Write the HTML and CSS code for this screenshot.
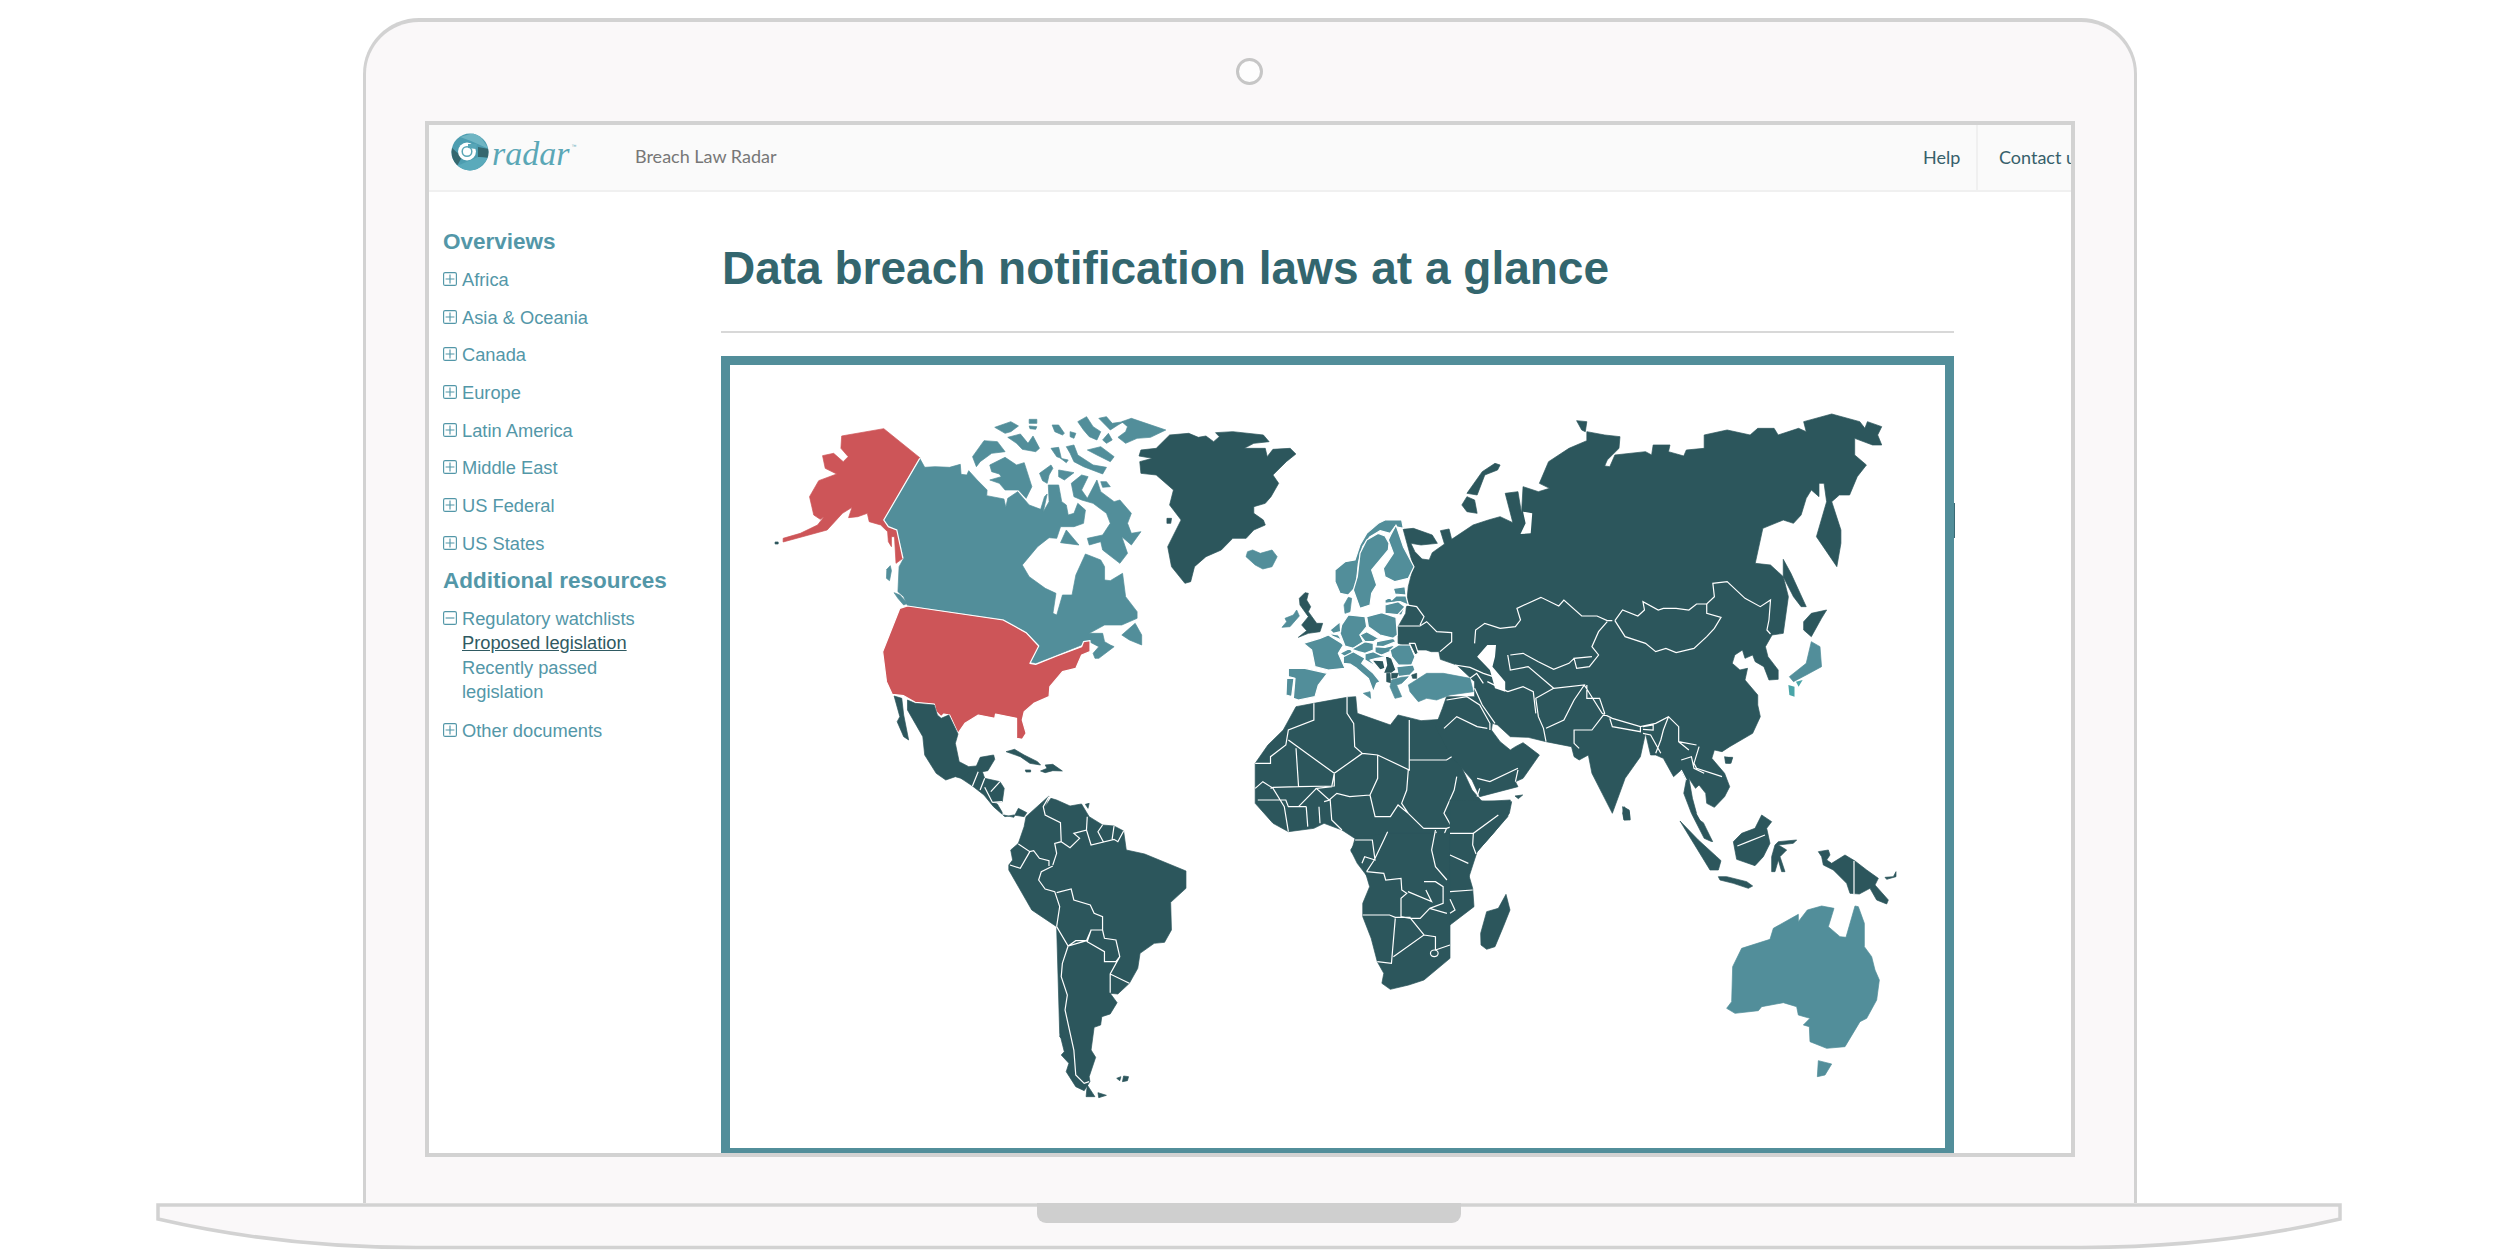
FILE: index.html
```html
<!DOCTYPE html>
<html lang="en">
<head>
<meta charset="utf-8">
<title>Breach Law Radar</title>
<link rel="stylesheet" href="styles.css">
</head>
<body>
<div class="laptop">
  <div class="lid">
    <div class="camera"></div>
    <div class="screen">
      <header class="topbar">
        <div class="logo">
          <svg class="logo-mark" viewBox="0 0 38 38" aria-hidden="true">
            <defs><clipPath id="lc"><circle cx="19" cy="19" r="18.5"/></clipPath></defs>
            <g clip-path="url(#lc)">
              <rect width="38" height="38" fill="#4d9db0"/>
              <polygon points="9,4 26,-1 38,16 20,8" fill="#6fb5c3"/>
              <polygon points="0,14 11,24 6,33 0,26" fill="#35686f"/>
              <polygon points="27,14 38,16 38,25 27,24" fill="#35686f"/>
              <polygon points="6,33 27,24 38,25 24,39 8,39" fill="#5aaabb"/>
            </g>
            <circle cx="16" cy="18.5" r="9" fill="#fff"/>
            <circle cx="16" cy="18.5" r="4.8" fill="none" stroke="#5ba7b6" stroke-width="1.5"/>
            <polygon points="17,11 26,11 25,16 17,15" fill="#57a6b7"/>
          </svg>
          <span class="logo-word">radar</span><span class="logo-tm">™</span>
        </div>
        <div class="product">Breach Law Radar</div>
        <nav class="topnav">
          <a class="topnav-link topnav-help">Help</a>
          <a class="topnav-link topnav-contact">Contact us</a>
        </nav>
      </header>
      <div class="page">
        <aside class="sidebar">
          <h3 class="side-head">Overviews</h3>
          <ul class="tree">
            <li class="tree-row"><svg class="box" viewBox="0 0 14 14"><rect x=".6" y=".6" width="12.8" height="12.8" rx="1.5"/><path d="M2.6 7H11.4M7 2.6V11.4"/></svg>Africa</li>
            <li class="tree-row"><svg class="box" viewBox="0 0 14 14"><rect x=".6" y=".6" width="12.8" height="12.8" rx="1.5"/><path d="M2.6 7H11.4M7 2.6V11.4"/></svg>Asia &amp; Oceania</li>
            <li class="tree-row"><svg class="box" viewBox="0 0 14 14"><rect x=".6" y=".6" width="12.8" height="12.8" rx="1.5"/><path d="M2.6 7H11.4M7 2.6V11.4"/></svg>Canada</li>
            <li class="tree-row"><svg class="box" viewBox="0 0 14 14"><rect x=".6" y=".6" width="12.8" height="12.8" rx="1.5"/><path d="M2.6 7H11.4M7 2.6V11.4"/></svg>Europe</li>
            <li class="tree-row"><svg class="box" viewBox="0 0 14 14"><rect x=".6" y=".6" width="12.8" height="12.8" rx="1.5"/><path d="M2.6 7H11.4M7 2.6V11.4"/></svg>Latin America</li>
            <li class="tree-row"><svg class="box" viewBox="0 0 14 14"><rect x=".6" y=".6" width="12.8" height="12.8" rx="1.5"/><path d="M2.6 7H11.4M7 2.6V11.4"/></svg>Middle East</li>
            <li class="tree-row"><svg class="box" viewBox="0 0 14 14"><rect x=".6" y=".6" width="12.8" height="12.8" rx="1.5"/><path d="M2.6 7H11.4M7 2.6V11.4"/></svg>US Federal</li>
            <li class="tree-row"><svg class="box" viewBox="0 0 14 14"><rect x=".6" y=".6" width="12.8" height="12.8" rx="1.5"/><path d="M2.6 7H11.4M7 2.6V11.4"/></svg>US States</li>
          </ul>
          <h3 class="side-head">Additional resources</h3>
          <ul class="tree">
            <li class="tree-group">
              <div class="tree-line"><svg class="box" viewBox="0 0 14 14"><rect x=".6" y=".6" width="12.8" height="12.8" rx="1.5"/><path d="M2.6 7H11.4"/></svg>Regulatory watchlists</div>
              <div class="sub"><a class="sub-current">Proposed legislation</a></div>
              <div class="sub">Recently passed<br>legislation</div>
            </li>
            <li class="tree-row"><svg class="box" viewBox="0 0 14 14"><rect x=".6" y=".6" width="12.8" height="12.8" rx="1.5"/><path d="M2.6 7H11.4M7 2.6V11.4"/></svg>Other documents</li>
          </ul>
        </aside>
        <main class="main">
          <h1 class="title">Data breach notification laws at a glance</h1>
          <hr class="rule">
          <figure class="map-frame">
            <svg class="map" viewBox="730 365 1215 783" role="img" aria-label="World map">
              <!-- North America -->
              <g transform="translate(720 350) scale(.38265 .33333)">
                <path class="red" d="M318,258 428,236 522,323 428,510 440,530 462,540 478,625 460,640 456,560 448,560 448,590 440,575 438,545 420,525 390,515 385,490 360,500 336,503 345,472 320,490 300,515 280,540 165,576 165,565 210,550 255,525 272,500 262,508 245,495 234,440 258,392 305,372 275,355 268,317 297,310 322,335 335,320 316,295Z"/>
                <path class="dark" d="M144,576 152,576 152,582 144,582Z"/>
                <path class="teal" d="M522,325 535,352 562,350 600,352 628,343 630,373 645,375 650,362 672,390 698,420 697,437 742,447 747,472 752,445 778,425 808,465 838,478 848,440 855,432 845,485 860,455 858,405 885,405 893,455 905,465 910,495 925,490 935,460 955,480 950,520 925,530 890,530 880,565 860,563 830,590 790,645 808,680 850,715 878,730 870,790 880,795 895,735 920,735 930,675 955,612 995,630 1005,650 1005,690 1020,692 1052,670 1060,740 1090,785 1090,805 1050,825 1005,825 965,850 1000,850 1005,875 1020,885 1030,890 990,925 980,925 975,910 990,890 965,875 945,885 880,915 825,940 810,935 833,885 800,845 740,808 490,767 480,740 465,725 468,650 480,625 462,540 440,530 428,510Z"/>
                <path class="teal" d="M945,375 962,380 945,420 960,445 985,390 995,425 1030,455 1045,450 1075,490 1065,520 1075,550 1100,545 1075,585 1050,560 1065,610 1045,640 1000,600 995,575 965,585 960,565 1000,555 1020,520 1010,490 975,460 945,450 925,440 918,400Z"/>
                <path class="teal" d="M890,578 905,540 938,585Z"/>
                <path class="teal" d="M660,320 690,272 725,275 745,305 710,310 680,335 670,350Z"/>
                <path class="teal" d="M705,345 745,322 775,345 795,338 815,410 800,445 780,420 745,420 730,400 705,390 735,380 730,372 710,365Z"/>
                <path class="teal" d="M835,370 865,345 870,355 860,375 855,400 843,392Z"/>
                <path class="teal" d="M885,360 925,368 900,390 885,380Z"/>
                <path class="teal" d="M718,232 760,215 780,228 760,245 745,250Z"/>
                <path class="teal" d="M752,262 785,252 805,280 818,258 835,295 825,305 790,298 775,280Z"/>
                <path class="teal" d="M808,208 828,208 828,220 808,220Z"/>
                <path class="teal" d="M808,228 828,230 825,238 810,236Z"/>
                <path class="teal" d="M868,225 885,225 900,250 895,255 875,245Z"/>
                <path class="teal" d="M915,245 930,250 925,265 915,260Z"/>
                <path class="teal" d="M935,215 958,200 975,230 995,245 985,270 965,260 950,240Z"/>
                <path class="teal" d="M990,205 1010,200 1025,220 1055,215 1040,225 1020,240Z"/>
                <path class="teal" d="M1075,205 1165,240 1125,262 1090,265 1060,280 1040,262 1060,245 1065,230 1050,215Z"/>
                <path class="teal" d="M865,295 885,292 892,325 880,320Z"/>
                <path class="teal" d="M905,290 925,285 935,315 975,345 1010,352 1000,372 950,350 925,335 915,310Z"/>
                <path class="teal" d="M960,300 995,290 1030,320 1020,335 985,315Z"/>
                <path class="teal" d="M1015,250 1000,270 1010,280 1025,270Z"/>
                <path class="teal" d="M890,325 910,330 905,338Z"/>
                <path class="teal" d="M995,395 1010,395 1020,410 1000,412Z"/>
                <path class="teal" d="M1050,855 1085,820 1102,855 1102,885 1070,870Z"/>
                <path class="teal" d="M436,658 445,647 448,662 443,692 435,685Z"/>
                <path class="teal" d="M455,728 470,735 490,760 480,765 465,745Z"/>
                <path class="red stroked" d="M470,775 490,768 740,810 800,848 833,888 810,940 825,943 880,918 945,890 950,875 967,872 967,905 945,915 930,955 895,965 862,1010 860,1040 820,1060 795,1085 790,1110 800,1150 790,1168 775,1165 775,1105 720,1092 718,1105 675,1095 640,1120 622,1150 600,1095 585,1092 578,1100 565,1085 560,1062 510,1057 480,1037 450,1033 435,995 425,905Z"/>
                <path class="line" d="M522,325 428,510 440,530 462,540 478,625"/>
                <path class="dark" d="M490,1050 510,1060 560,1065 568,1095 578,1105 598,1095 622,1152 615,1180 625,1235 650,1250 670,1248 680,1222 715,1215 718,1228 700,1262 665,1270 660,1295 645,1290 615,1280 590,1290 565,1270 535,1215 530,1160 490,1080Z"/>
                <path class="dark" d="M455,1038 475,1045 480,1095 493,1170 480,1160 463,1115 470,1100Z"/>
                <path class="dark" d="M1100,300 1140,295 1175,255 1225,250 1250,262 1270,258 1290,275 1305,260 1295,248 1340,245 1420,255 1435,275 1395,280 1370,295 1425,295 1430,320 1445,298 1490,295 1505,312 1480,335 1445,375 1460,400 1440,440 1425,460 1395,470 1395,490 1420,510 1425,525 1395,540 1375,565 1340,565 1310,600 1270,620 1240,650 1230,695 1215,700 1180,650 1170,590 1205,510 1175,465 1185,420 1140,375 1100,370 1097,335 1130,325 1095,318Z"/>
                <path class="white" d="M1165,515 1178,500 1180,520 1170,525Z"/>
                <path class="dark" d="M1168,505 1180,505 1178,520 1168,520Z"/>
                <path class="white" d="M1410,480 1430,478 1425,492 1410,490Z"/>
              </g>
              <!-- South America -->
              <g transform="translate(850 700) scale(.38265 .33333)">
                <path class="dark" d="M290,235 322,210 345,212 352,235 392,245 403,265 398,305 372,307 385,312 402,345 428,352 440,325 462,338 455,350 428,345 405,350 375,320 350,285 320,258Z"/>
                <path class="line" d="M320,258 335,215M340,270 352,235M352,262 372,307M372,307 398,305M368,275 392,245M402,318 400,345"/>
                <path class="dark" d="M408,155 430,148 455,165 490,185 498,195 470,190 445,170 420,160Z"/>
                <path class="dark" d="M510,195 530,193 555,213 530,212 510,218 498,213 515,205Z"/>
                <path class="dark" d="M458,210 472,210 472,216 460,216Z"/>
                <path class="dark" d="M615,313 625,310 622,325Z"/>
                <path class="dark" d="M460,350 520,288 510,320 525,295 540,300 575,318 605,312 625,350 660,375 690,378 715,393 722,450 770,462 878,513 878,565 838,607 840,690 822,727 795,730 758,760 752,805 730,850 700,882 680,880 698,908 680,942 658,950 655,975 638,982 630,1050 642,1072 625,1130 627,1145 612,1172 590,1160 565,1115 572,1090 552,1065 560,1055 548,1000 540,680 475,630 415,510 415,495 425,480 420,450 440,430 455,380Z"/>
                <path class="dark" d="M620,1155 640,1190 617,1190Z"/>
                <path class="dark" d="M648,1178 670,1186 650,1193Z"/>
                <path class="dark" d="M697,1135 708,1130 705,1142Z"/>
                <path class="dark" d="M715,1128 728,1130 725,1142 712,1145Z"/>
                <path class="dark" d="M550,998 555,1000 555,1018 548,1010Z"/>
                <path class="line" d="M520,290 505,320 510,345 550,368 552,425 535,430 540,460 530,495M440,432 470,455 480,452 495,475 520,482 520,498M470,455 445,505 418,495M552,425 575,443 600,415 585,400 618,390 620,350M618,390 630,435 690,418 700,425 715,393M660,375 648,395 662,425M690,378 685,418M530,498 500,515 493,540 510,567 535,575 548,620 540,680M540,578 578,567 585,600 628,615 638,640 660,650 660,690 630,690 618,722 570,738 540,680M630,690 620,725 665,755 665,785 695,785 705,770 695,720 665,715 660,690M570,738 555,790 552,830 568,885 562,930 585,1050 590,1125 612,1150 625,1145M705,770 680,822 680,878M680,822 730,850M570,738 590,722 618,722"/>
              </g>
              <!-- Asia and north Africa -->
              <g transform="translate(1120 380) scale(.51020 .33333)">
                <path class="dark" d="M345,980 380,970 445,952 462,950 465,1000 530,1035 545,1005 590,1022 630,1018 640,1040 660,1130 690,1230 710,1265 765,1260 760,1310 700,1415 682,1500 490,1500 465,1450 452,1410 465,1380 435,1350 400,1330 380,1345 330,1355 300,1330 265,1270 265,1150 290,1095 320,1050Z"/>
                <path class="dark" d="M555,448 575,445 612,465 622,490 590,495 570,490 578,515 592,537 606,540 612,518 636,492 628,452 645,447 650,478 692,435 722,420 745,410 770,428 755,340 780,335 787,400 790,320 820,335 842,325 822,310 840,245 880,205 915,182 915,155 950,165 980,170 978,205 955,240 950,258 960,260 970,225 1030,215 1042,225 1045,195 1078,195 1075,215 1105,228 1110,210 1145,205 1145,165 1190,150 1235,165 1250,145 1282,145 1290,165 1330,145 1345,155 1340,125 1395,102 1450,125 1460,145 1465,125 1493,140 1485,165 1493,195 1475,195 1440,175 1440,225 1463,255 1445,290 1430,345 1410,345 1395,365 1413,450 1413,490 1405,560 1365,470 1385,365 1380,310 1370,310 1370,350 1355,330 1345,355 1335,405 1320,430 1300,420 1260,445 1245,550 1275,555 1300,590 1310,650 1300,760 1278,765 1265,800 1270,830 1290,870 1290,898 1272,900 1262,860 1245,845 1240,825 1225,835 1220,810 1205,825 1200,850 1215,870 1230,865 1225,900 1250,945 1250,975 1255,1010 1240,1060 1195,1100 1180,1115 1165,1110 1160,1135 1185,1180 1195,1220 1185,1250 1165,1282 1150,1270 1148,1240 1135,1215 1128,1225 1115,1195 1122,1255 1130,1300 1160,1385 1145,1375 1120,1300 1105,1240 1110,1200 1100,1170 1085,1190 1065,1135 1050,1125 1040,1125 1030,1060 1020,1130 990,1195 965,1300 945,1240 925,1180 918,1125 900,1140 890,1130 885,1100 835,1085 800,1072 765,1070 740,1035 730,1030 728,1050 745,1085 765,1110 775,1100 790,1088 822,1125 790,1195 775,1205 780,1220 705,1250 690,1200 650,1130 618,1040 632,985 640,950 695,950 695,905 660,855 628,838 625,815 610,815 600,810 575,810 545,790 545,740 560,700 565,620 575,560Z"/>
                <path class="white" d="M790,395 808,400 805,460 785,462 795,430Z"/>
                <path class="white" d="M700,830 720,795 737,795 735,830 730,860 755,905 755,935 735,925 725,870Z"/>
                <path class="white" d="M1130,1300 1145,1310 1155,1365 1145,1340Z"/>
                <path class="dark" d="M680,340 710,275 735,250 745,255 740,270 715,285 700,345Z"/>
                <path class="dark" d="M670,375 680,350 695,360 700,400 680,395Z"/>
                <path class="dark" d="M895,122 915,125 912,155 905,150Z"/>
                <path class="dark" d="M1300,538 1315,580 1345,680 1335,680 1320,650 1300,590Z"/>
                <path class="dark" d="M1340,725 1355,700 1385,690 1375,715 1355,770 1340,750Z"/>
                <path class="dark" d="M1185,1130 1200,1135 1195,1150 1187,1150Z"/>
                <path class="dark" d="M985,1280 998,1290 1000,1320 988,1320Z"/>
                <path class="teal" d="M1355,785 1372,800 1375,860 1345,885 1320,905 1312,890 1345,850Z"/>
                <path class="bright" d="M1310,915 1322,920 1322,950 1312,945Z"/>
                <path class="bright" d="M1325,905 1338,900 1330,920Z"/>
                <path class="teal" d="M250,515 260,510 275,520 298,510 308,530 298,560 280,567 265,555 247,530Z"/>
                <path class="line" d="M695,790 697,750 715,730 745,745 775,740 785,720 778,685 825,652 860,678 870,660 905,708 935,708 955,722 965,722"/>
                <path class="line" d="M970,722 985,690 1015,708 1028,690 1025,665 1055,690 1065,685 1090,685 1115,690 1130,672 1150,672 1165,650 1162,610 1190,605 1225,655 1255,680 1275,660 1272,720 1268,750 1275,762"/>
                <path class="line" d="M970,722 990,770 1030,790 1050,815 1070,805 1090,818 1125,805 1150,770 1165,745 1178,712 1150,700 1150,672"/>
                <path class="line" d="M955,725 938,755 925,800 938,825 920,860 895,865 890,835 925,830M765,825 790,820 820,845 850,868 880,850 890,835M760,825 765,870 800,860 850,925M850,925 815,955 820,1010 830,1045 835,1085M850,925 910,915 890,960 870,1020 835,1045M915,915 915,955 940,955 950,1000 925,1050 890,1050 890,1090 900,1105M910,915 945,1000 965,1015 1020,1040 1050,1030 1075,1010 1095,1040 1095,1085 1130,1095M960,1015 965,1040 1020,1055 1020,1040M1025,1040 1045,1035 1045,1050 1025,1048M1025,1060 1040,1065 1060,1120M1060,1080 1050,1120M1075,1010 1065,1050 1060,1080M1095,1085 1115,1110M1135,1100 1125,1150 1130,1165 1180,1190M1100,1140 1120,1130 1125,1165 1145,1180M1100,1170 1110,1200M695,925 710,975 735,1030M760,935 790,920 810,935 815,1000M640,960 680,950 705,975 725,1030 725,1050M635,1045 660,1010 700,1040 720,1045M700,1195 725,1205 780,1165M780,1170 775,1205M700,1250 705,1225M760,935 720,905"/>
                <path class="line" d="M265,1150 295,1150 295,1130 325,1095 330,1050 380,1020 380,970M330,1080 420,1180 475,1120 460,1100 458,1030 445,1000 445,950M475,1120 505,1125 567,1170 567,1020M567,1140 640,1140 650,1130M345,1105 350,1220 300,1222 295,1225M350,1220 420,1218 420,1180M420,1180 415,1220 385,1225 410,1260 425,1240 450,1250 490,1245 505,1195 505,1125M490,1245 500,1310 530,1310 545,1275 565,1300 595,1345M565,1170 562,1230 552,1270 565,1300M660,1190 655,1230 635,1300 650,1340 695,1360 755,1290M595,1345 640,1345 650,1340M265,1225 280,1205 300,1225 322,1280 330,1355M270,1260 325,1260 330,1280 365,1280M385,1225 350,1280M365,1280 368,1340M390,1280 392,1330M400,1265 412,1260 415,1320 435,1350M690,1360 695,1415M620,1355 610,1420M640,1345 620,1420 660,1410 682,1450M455,1380 500,1380 495,1430"/>
              </g>
              <!-- Europe -->
              <g transform="translate(1270 510) scale(.33333)">
                <path class="teal stroked" d="M195,180 225,155 255,150 270,105 290,70 325,40 345,30 395,30 400,55 375,50 360,70 330,62 300,80 278,110 265,160 258,230 235,255 210,250 195,215Z"/>
                <path class="teal stroked" d="M325,70 345,78 357,100 355,120 330,150 305,180 320,225 305,250 300,285 270,295 250,240 262,200 270,130 290,90Z"/>
                <path class="teal stroked" d="M362,75 378,45 400,110 432,170 415,205 375,215 345,200 340,175 370,130 355,90Z"/>
                <path class="teal" d="M235,262 245,265 240,305 225,310 222,285Z"/>
                <path class="teal stroked" d="M370,235 405,230 408,255 375,252Z"/>
                <path class="teal stroked" d="M345,270 360,262 365,270 378,258 408,258 415,285 390,275 345,280Z"/>
                <path class="teal stroked" d="M345,285 385,275 405,290 395,315 345,310Z"/>
                <path class="teal stroked" d="M290,320 335,308 378,322 382,375 370,385 330,375 295,350Z"/>
                <path class="teal stroked" d="M215,345 235,315 285,320 290,350 270,375 280,395 250,415 225,408 210,370Z"/>
                <path class="teal stroked" d="M180,360 210,335 212,365 190,370Z"/>
                <path class="teal stroked" d="M175,370 205,375 215,390 190,380Z"/>
                <path class="teal stroked" d="M100,400 150,385 175,375 215,400 220,405 205,430 225,475 175,480 135,470 125,420Z"/>
                <path class="teal stroked" d="M55,475 105,475 172,490 145,525 135,560 85,570 70,565 75,505 55,500Z"/>
                <path class="teal stroked" d="M50,505 72,505 65,560 48,555Z"/>
                <path class="teal stroked" d="M210,430 240,415 250,430 225,440Z"/>
                <path class="teal stroked" d="M220,440 250,425 285,445 275,460 310,490 330,515 320,520 310,545 295,505 260,475 240,462 220,460Z"/>
                <path class="teal" d="M280,550 300,545 302,565Z"/>
                <path class="teal stroked" d="M245,418 285,395 310,400 310,420 285,430 265,425Z"/>
                <path class="teal stroked" d="M270,375 290,365 325,385 310,395 285,395Z"/>
                <path class="teal stroked" d="M320,395 370,385 378,395 340,410 318,408Z"/>
                <path class="teal stroked" d="M315,410 345,412 375,405 360,425 335,435 315,430Z"/>
                <path class="teal stroked" d="M285,432 310,425 335,437 355,440 320,445 300,450 320,470 285,450Z"/>
                <path class="dark stroked" d="M305,450 340,452 345,475 330,480Z"/>
                <path class="dark stroked" d="M345,435 365,445 378,480 365,490 340,490 350,465Z"/>
                <path class="teal stroked" d="M360,420 385,405 420,405 435,440 425,465 385,465 365,440Z"/>
                <path class="teal stroked" d="M380,470 430,465 435,480 420,495 385,500Z"/>
                <path class="teal" d="M365,510 395,502 415,500 395,520 380,525 395,560 375,565 360,530Z"/>
                <path class="dark" d="M350,490 360,490 362,518 350,515Z"/>
                <path class="dark" d="M365,490 385,490 380,503 365,505Z"/>
                <path class="dark stroked" d="M418,400 435,400 445,430 435,435Z"/>
                <path class="dark" d="M425,495 440,490 440,505 428,505Z"/>
                <path class="teal" d="M415,525 470,490 520,490 600,505 610,545 540,555 500,570 470,565 445,575 420,545Z"/>
                <path class="teal" d="M45,325 70,315 80,300 88,318 60,350 36,352 50,335Z"/>
                <path class="dark" d="M105,248 115,250 110,270 122,290 115,305 140,340 158,340 150,365 115,370 85,382 110,362 95,345 115,320 90,285 88,265Z"/>
                <path class="line" d="M378,320 410,285 440,290 462,320 450,345M385,348 450,348 470,335 500,365 545,368 545,395 510,425"/>
                <path class="line" d="M555,465 600,472 640,490 670,500M600,505 620,490 640,520"/>
              </g>
              <!-- southern Africa -->
              <g transform="translate(850 700) scale(.38265 .33333)">
                <path class="dark" d="M1320,415 1310,455 1340,490 1358,560 1340,610 1340,650 1362,715 1378,785 1395,820 1390,850 1412,868 1460,855 1500,840 1568,775 1568,400 1400,400Z"/>
                <path class="line" d="M1320,420 1365,420 1372,480 1345,470 1338,490M1405,395 1395,420 1370,480 1350,515M1350,515 1395,520 1400,540 1440,535 1442,570 1455,580 1440,595 1440,650 1465,655M1340,645 1410,645 1425,652 1465,652M1425,655 1415,790 1378,785M1465,655 1500,705 1420,770M1500,705 1530,710 1530,750M1465,655 1490,655 1515,625 1560,640M1530,390 1520,450 1530,500 1560,540M1500,545 1530,545 1550,560 1550,610 1515,625M1458,575 1520,605 1505,570M1530,750 1568,735"/>
                <circle class="line" cx="1527" cy="760" r="10"/>
              </g>
              <!-- east Africa, SE Asia, Oceania -->
              <g transform="translate(1450 700) scale(.33333)">
                <path class="dark" d="M0,300 185,305 178,340 130,400 75,462 52,510 68,565 72,620 0,675Z"/>
                <path class="line" d="M0,400 70,400 145,345M70,400 68,435 78,462M0,465 55,490M0,575 68,570M0,598 15,630 0,640"/>
                <path class="dark" d="M168,583 180,630 160,680 135,740 110,748 93,735 92,700 110,635 145,625Z"/>
                <path class="dark" d="M195,288 218,285 205,296Z"/>
                <path class="dark" d="M522,320 538,335 540,358 522,360 518,340Z"/>
                <path class="dark" d="M830,172 848,172 843,190 828,188Z"/>
                <path class="dark" d="M690,363 745,420 800,470 813,482 805,510 780,510Z"/>
                <path class="dark" d="M805,530 830,530 890,545 908,558 895,565 850,550 810,540Z"/>
                <path class="dark" d="M735,352 760,368 788,425 760,395Z"/>
                <path class="dark" d="M850,425 875,400 915,385 935,345 965,365 950,385 960,430 940,470 915,497 860,478Z"/>
                <path class="line" d="M862,438 895,425 945,405"/>
                <path class="dark" d="M985,425 1040,420 1030,430 985,435 1010,450 990,470 1005,515 995,515 985,480 975,515 965,515 965,470 975,435Z"/>
                <path class="dark" d="M1105,455 1135,450 1140,465 1130,480 1145,490 1185,465 1215,483 1250,510 1285,535 1275,555 1315,600 1310,612 1280,600 1260,565 1228,582 1200,580 1190,550 1150,510 1120,495 1115,470Z"/>
                <path class="line" d="M1212,483V582"/>
                <path class="dark" d="M1305,532 1330,530 1338,515 1338,530 1310,538Z"/>
                <path class="teal" d="M1072,630 1115,618 1152,625 1135,680 1170,710 1188,712 1215,618 1225,620 1243,670 1243,740 1265,770 1275,810 1288,840 1280,900 1250,955 1230,965 1185,1040 1130,1045 1080,1025 1078,980 1060,975 1080,955 1045,945 1040,920 1000,908 935,920 925,932 855,940 830,925 845,905 848,800 875,745 960,718 970,685 1045,643 1045,665Z"/>
                <path class="teal" d="M1105,1082 1145,1092 1125,1125 1102,1130Z"/>
              </g>
            </svg>
          </figure>
        </main>
      </div>
    </div>
  </div>
  <div class="base">
    <svg class="base-shape" viewBox="0 0 2186 47" aria-hidden="true"><path d="M2,2H2184V16C2106,34 2016,44.5 1926,44.5H260C170,44.5 80,34 2,16Z"/></svg>
    <div class="notch"></div>
  </div>
</div>
</body>
</html>
```

FILE: styles.css
```css
* { box-sizing: border-box; }
html, body { margin: 0; padding: 0; background: #fff; }
body { width: 2500px; height: 1250px; overflow: hidden; font-family: "Liberation Sans", Arial, sans-serif; }

.laptop { display: flex; flex-direction: column; padding-top: 18px; }

.lid {
  position: relative;
  width: 1774px;
  height: 1185px;
  margin-left: 363px;
  padding: 99px 0 0 59px;
  background: #faf8f9;
  border: 3px solid #d2d2d2;
  border-top-width: 4px;
  border-bottom: 0;
  border-radius: 56px 56px 0 0;
}

.camera {
  position: absolute;
  left: 870px;
  top: 36px;
  width: 27px;
  height: 27px;
  border: 3px solid #c6c6c6;
  border-radius: 50%;
  background: #fdfdfd;
}

.screen {
  width: 1650px;
  height: 1036px;
  background: #fff;
  border: 4px solid #d2d2d2;
  overflow: hidden;
  display: flex;
  flex-direction: column;
}

.topbar {
  flex: none;
  height: 67px;
  display: flex;
  align-items: stretch;
  background: #fafafa;
  border-bottom: 2px solid #f0f0f0;
}
.logo { width: 206px; display: flex; align-items: flex-start; padding: 8px 0 0 22px; }
.logo-mark { width: 38px; height: 38px; flex: none; }
.logo-word {
  margin: -4px 0 0 3px;
  font: italic 34px/50px "Liberation Serif", serif;
  color: #5ba7b6;
}
.logo-tm { font-size: 5px; color: #5ba7b6; margin: 10px 0 0 2px; }
.product {
  align-self: center;
  margin-top: -3px;
  font: 18px/22px Lato, sans-serif;
  color: #777;
}
.topnav { margin-left: auto; display: flex; align-items: stretch; width: 151px; flex: none; overflow: hidden; }
.topnav-link {
  display: flex;
  align-items: center;
  padding-bottom: 2px;
  font: 18px/22px Lato, sans-serif;
  color: #36606a;
  white-space: nowrap;
}
.topnav-help { width: 58px; flex: none; padding-left: 3px; border-right: 2px solid #f0f0f0; }
.topnav-contact { padding-left: 21px; }

.page { flex: 1; min-height: 0; display: flex; }

.sidebar { flex: none; width: 292px; padding: 32px 0 0 14px; color: #5397a8; font-size: 18.3px; }
.side-head { margin: 0 0 2px; font-size: 22.5px; line-height: 35px; font-weight: 700; color: #5397a8; }
.tree { list-style: none; margin: 0; padding: 0; }
.tree-row { display: flex; align-items: center; height: 37.7px; white-space: nowrap; }
.box { width: 14px; height: 14px; flex: none; margin-right: 5px; position: relative; top: -1px; }
.box rect, .box path { fill: none; stroke: #5397a8; stroke-width: 1.15; }
.tree-group { padding-top: 7px; margin-bottom: 7px; line-height: 24.6px; }
.tree-line { display: flex; align-items: center; }
.sub { padding-left: 19px; }
.sub-current { color: #2f5a62; text-decoration: underline; }

.main { flex: none; width: 1233px; }
.title {
  margin: 0;
  padding: 41px 0 0 1px;
  font-size: 46px;
  line-height: 70px;
  font-weight: 700;
  color: #33666e;
}
.rule { margin: 28px 0 0; height: 2px; border: 0; background: #d8d8d8; }
.map-frame {
  position: relative;
  margin: 23px 0 0;
  width: 1233px;
  height: 797px;
  border: 9px solid #528e9a;
  border-bottom-width: 5px;
  background: #fff;
}
.map-frame::after {
  content: "";
  position: absolute;
  right: -10px;
  top: 138px;
  width: 1px;
  height: 35px;
  background: #3a6a75;
}
.map { display: block; width: 1215px; height: 783px; }

.map path, .map circle { stroke: none; fill: none; }
.map .dark { fill: #2c565c; stroke: #2c565c; stroke-width: .7; stroke-linejoin: round; vector-effect: non-scaling-stroke; }
.map .teal { fill: #528e9a; stroke: #528e9a; stroke-width: .7; stroke-linejoin: round; vector-effect: non-scaling-stroke; }
.map .red { fill: #cd5558; stroke: #cd5558; stroke-width: .7; stroke-linejoin: round; vector-effect: non-scaling-stroke; }
.map .white { fill: #fff; }
.map .bright { fill: #49a5a8; }
.map .stroked { stroke: #fff; stroke-width: 1.2; vector-effect: non-scaling-stroke; }
.map .line { fill: none; stroke: #fff; stroke-width: 1.2; vector-effect: non-scaling-stroke; }

.base {
  position: relative;
  width: 2186px;
  height: 47px;
  margin-left: 156px;
  display: flex;
  justify-content: center;
}
.base-shape { position: absolute; inset: 0; width: 100%; height: 100%; }
.base-shape path { fill: #faf8f9; stroke: #d2d2d2; stroke-width: 3.5; }
.notch {
  position: relative;
  width: 424px;
  height: 20px;
  background: #cfcfcf;
  border-radius: 0 0 9px 9px;
}
```
